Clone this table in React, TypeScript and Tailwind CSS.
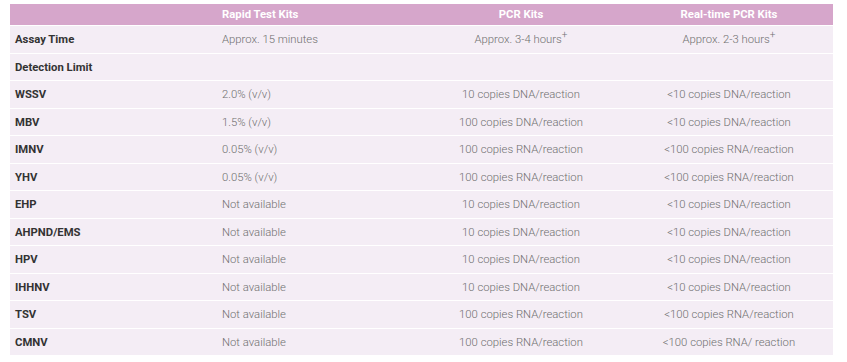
const rows: [string, string, string, string][] = [
  ['WSSV', '2.0% (v/v)', '10 copies DNA/reaction', '<10 copies DNA/reaction'],
  ['MBV', '1.5% (v/v)', '100 copies DNA/reaction', '<10 copies DNA/reaction'],
  ['IMNV', '0.05% (v/v)', '100 copies RNA/reaction', '<100 copies RNA/reaction'],
  ['YHV', '0.05% (v/v)', '100 copies RNA/reaction', '<100 copies RNA/reaction'],
  ['EHP', 'Not available', '10 copies DNA/reaction', '<10 copies DNA/reaction'],
  ['AHPND/EMS', 'Not available', '10 copies DNA/reaction', '<10 copies DNA/reaction'],
  ['HPV', 'Not available', '10 copies DNA/reaction', '<10 copies DNA/reaction'],
  ['IHHNV', 'Not available', '10 copies DNA/reaction', '<10 copies DNA/reaction'],
  ['TSV', 'Not available', '100 copies RNA/reaction', '<100 copies RNA/reaction'],
  ['CMNV', 'Not available', '100 copies RNA/reaction', '<100 copies RNA/ reaction'],
];

function Row({ cells }: { cells: React.ReactNode[] }) {
  return (
    <div className="grid h-[27.5px] grid-cols-[207px_200px_208px_208px] items-center border-t border-white bg-[#f4edf5] pt-[3px] text-[11.3px]">
      <div className="pl-[5px] font-bold text-[#333]">{cells[0]}</div>
      <div className="pl-[5px] font-light text-[#6f6f6f]">{cells[1]}</div>
      <div className="text-center font-light text-[#6f6f6f]">{cells[2]}</div>
      <div className="text-center font-light text-[#6f6f6f]">{cells[3]}</div>
    </div>
  );
}

export default function App() {
  return (
    <div className="h-[362px] w-[847px] bg-white pl-[10px] pt-[4px] font-['Roboto',sans-serif]">
      <div className="w-[823px]">
        <div className="grid h-[21px] grid-cols-[207px_200px_208px_208px] items-center bg-[#d6a6cb] pt-[2px] text-[11.3px] font-bold text-white">
          <div />
          <div className="pl-[5px]">Rapid Test Kits</div>
          <div className="text-center">PCR Kits</div>
          <div className="text-center">Real-time PCR Kits</div>
        </div>
        <Row
          cells={[
            'Assay Time',
            'Approx. 15 minutes',
            <>Approx. 3-4 hours<sup className="text-[10px]">+</sup></>,
            <>Approx. 2-3 hours<sup className="text-[10px]">+</sup></>,
          ]}
        />
        <Row cells={['Detection Limit', '', '', '']} />
        {rows.map((r) => (
          <Row key={r[0]} cells={r} />
        ))}
      </div>
    </div>
  );
}
